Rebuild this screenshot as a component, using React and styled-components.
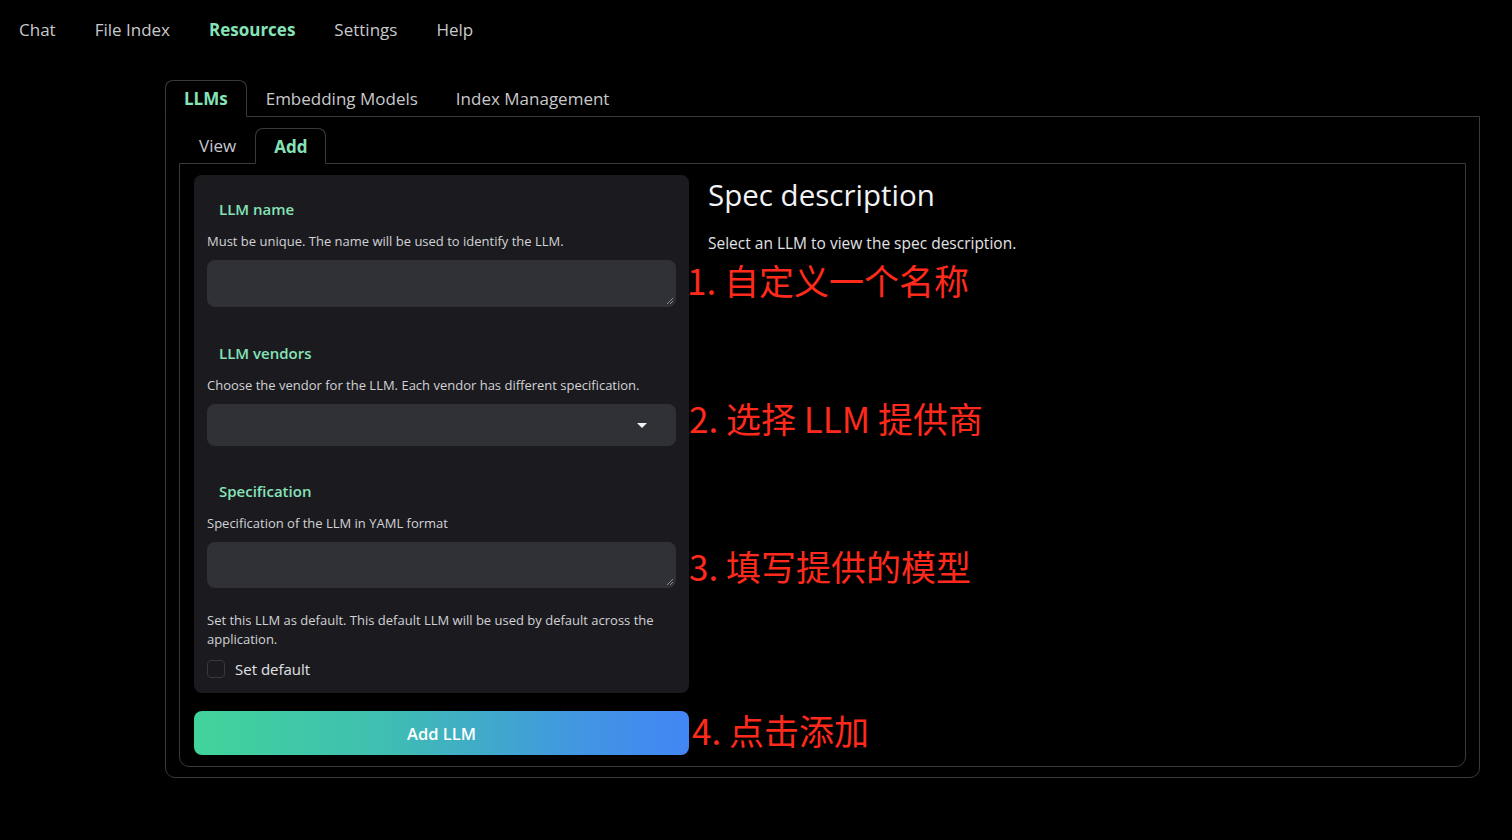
import React from 'react';
import styled, { createGlobalStyle } from 'styled-components';

const GlobalStyle = createGlobalStyle`
  html, body {
    margin: 0;
    padding: 0;
    background: #000;
  }
  body {
    font-family: "Open Sans", "Noto Sans", sans-serif;
    color: #e5e5e5;
  }
`;

const Page = styled.div`
  width: 1512px;
  height: 840px;
  background: #000;
  position: relative;
  overflow: hidden;
`;

const Nav = styled.nav`
  display: flex;
  gap: 39px;
  padding: 18px 0 0 19px;
  height: 79px;
  box-sizing: border-box;
`;

const NavItem = styled.span`
  font-size: 17px;
  line-height: 24px;
  color: ${(p) => (p.active ? '#86e3b8' : '#c9c9cc')};
  font-weight: ${(p) => (p.active ? 700 : 400)};
`;

const Section = styled.div`
  margin-left: 165px;
  width: 1315px;
`;

const TabRow = styled.div`
  display: flex;
  align-items: flex-end;
  padding-left: ${(p) => p.indent || 0}px;
  position: relative;
  z-index: 1;
`;

const Tab = styled.div`
  font-size: 17px;
  padding: 0 18px;
  height: ${(p) => p.h || 37}px;
  display: flex;
  align-items: center;
  box-sizing: border-box;
  color: ${(p) => (p.active ? '#86e3b8' : '#c9c9cc')};
  font-weight: ${(p) => (p.active ? 700 : 400)};
  border: 1px solid ${(p) => (p.active ? '#3a3a3e' : 'transparent')};
  border-bottom: ${(p) => (p.active ? '1px solid #000' : 'none')};
  border-radius: 8px 8px 0 0;
  margin-bottom: ${(p) => (p.active ? -1 : 0)}px;
  background: ${(p) => (p.active ? '#000' : 'transparent')};
`;

const OuterBox = styled.div`
  border: 1px solid #3a3a3e;
  border-radius: 0 0 10px 10px;
  padding: 10px 13px 10px 13px;
`;

const InnerBox = styled.div`
  border: 1px solid #3a3a3e;
  border-radius: 0 0 10px 10px;
  padding: 11px 14px 11px 14px;
  display: flex;
  gap: 19px;
  position: relative;
`;

const LeftCol = styled.div`
  width: 495px;
  flex-shrink: 0;
  display: flex;
  flex-direction: column;
  gap: 18px;
`;

const Card = styled.div`
  background: #1b1b1f;
  border-radius: 8px;
  padding: 22px 13px 14px 13px;
  display: flex;
  flex-direction: column;
`;

const Field = styled.div`
  display: flex;
  flex-direction: column;
  margin-bottom: ${(p) => p.mb || 0}px;
`;

const Label = styled.div`
  color: #86e3b8;
  font-size: 15px;
  font-weight: 600;
  padding-left: 12px;
  line-height: 24px;
`;

const Info = styled.div`
  font-size: 13px;
  color: #d2d2d6;
  line-height: 19px;
  margin-top: ${(p) => p.mt || 0}px;
  margin-bottom: ${(p) => p.mb || 0}px;
`;

const TextArea = styled.div`
  height: ${(p) => p.h}px;
  background: #303136;
  border-radius: 8px;
  position: relative;
`;

const Grip = styled.svg`
  position: absolute;
  right: 2px;
  bottom: 2px;
`;

const Select = styled.div`
  height: 42px;
  background: #303136;
  border-radius: 8px;
  display: flex;
  align-items: center;
  justify-content: flex-end;
  padding-right: 29px;
`;

const Caret = styled.div`
  width: 0;
  height: 0;
  border-left: 5px solid transparent;
  border-right: 5px solid transparent;
  border-top: 5px solid #f2f2f2;
`;

const CheckRow = styled.label`
  display: flex;
  align-items: center;
  gap: 10px;
  margin-top: 10px;
  font-size: 15px;
  color: #e2e2e6;
`;

const Box = styled.span`
  width: 16px;
  height: 16px;
  border: 1px solid #38383c;
  border-radius: 4px;
  background: #1b1b1f;
`;

const AddButton = styled.button`
  height: 44px;
  border: none;
  border-radius: 8px;
  background: linear-gradient(90deg, #41d49a 0%, #3fbdb3 40%, #4294e4 80%, #4286f5 100%);
  color: #fff;
  font-family: inherit;
  font-size: 16.5px;
  font-weight: 600;
`;

const RightCol = styled.div`
  flex: 1;
`;

const Heading = styled.h2`
  margin: 0;
  font-size: 29.5px;
  font-weight: 500;
  color: #f3f3f5;
  line-height: 40px;
`;

const Desc = styled.p`
  margin: 18px 0 0 0;
  font-size: 15.5px;
  line-height: 20px;
  color: #e2e2e6;
`;

const Note = styled.div`
  position: absolute;
  left: ${(p) => p.x}px;
  top: ${(p) => p.y}px;
  color: #ff2a1c;
  font-size: 35px;
  font-family: "Noto Sans CJK SC", "Noto Sans", sans-serif;
  white-space: nowrap;
  line-height: 1;
`;

const ResizeGrip = () => (
  <Grip width="8" height="8" viewBox="0 0 8 8">
    <path d="M7 1 L1 7 M7 4 L4 7" stroke="#8a8a8e" strokeWidth="1" />
  </Grip>
);

export default function App() {
  return (
    <Page>
      <GlobalStyle />
      <Nav>
        <NavItem>Chat</NavItem>
        <NavItem>File Index</NavItem>
        <NavItem active>Resources</NavItem>
        <NavItem>Settings</NavItem>
        <NavItem>Help</NavItem>
      </Nav>
      <Section>
        <TabRow>
          <Tab active>LLMs</Tab>
          <Tab>Embedding Models</Tab>
          <Tab>Index Management</Tab>
        </TabRow>
        <OuterBox>
          <TabRow indent={1}>
            <Tab h={36}>View</Tab>
            <Tab h={36} active>Add</Tab>
          </TabRow>
          <InnerBox>
            <LeftCol>
              <Card>
                <Field mb={34}>
                  <Label>LLM name</Label>
                  <Info mt={11} mb={9}>Must be unique. The name will be used to identify the LLM.</Info>
                  <TextArea h={47}><ResizeGrip /></TextArea>
                </Field>
                <Field mb={33}>
                  <Label>LLM vendors</Label>
                  <Info mt={11} mb={9}>Choose the vendor for the LLM. Each vendor has different specification.</Info>
                  <Select><Caret /></Select>
                </Field>
                <Field mb={23}>
                  <Label>Specification</Label>
                  <Info mt={11} mb={9}>Specification of the LLM in YAML format</Info>
                  <TextArea h={46}><ResizeGrip /></TextArea>
                </Field>
                <Info>Set this LLM as default. This default LLM will be used by default across the application.</Info>
                <CheckRow>
                  <Box />
                  Set default
                </CheckRow>
              </Card>
              <AddButton>Add LLM</AddButton>
            </LeftCol>
            <RightCol>
              <Heading>Spec description</Heading>
              <Desc>Select an LLM to view the spec description.</Desc>
            </RightCol>
            <Note x={507} y={98}>1. 自定义一个名称</Note>
            <Note x={509} y={236}>2. 选择 LLM 提供商</Note>
            <Note x={509} y={384}>3. 填写提供的模型</Note>
            <Note x={512} y={548}>4. 点击添加</Note>
          </InnerBox>
        </OuterBox>
      </Section>
    </Page>
  );
}
